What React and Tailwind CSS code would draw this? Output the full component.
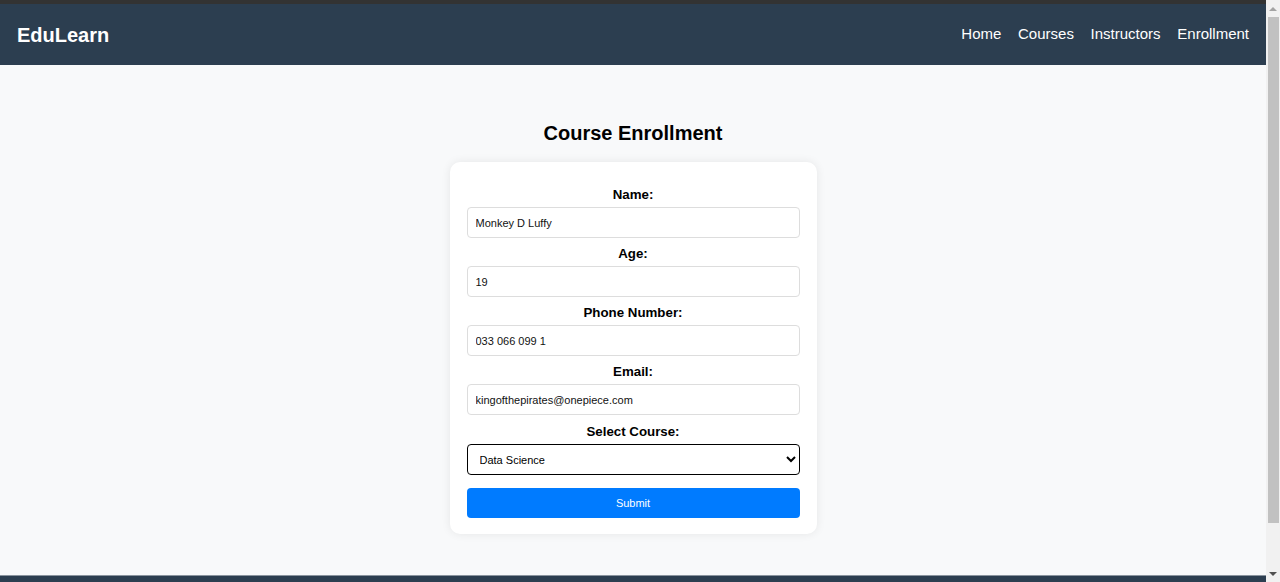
import { useState } from 'react';

const fields = [
    { id: 'name', label: 'Name:', value: 'Monkey D Luffy' },
    { id: 'age', label: 'Age:', value: '19' },
    { id: 'phone', label: 'Phone Number:', value: '033 066 099 1' },
    { id: 'email', label: 'Email:', value: 'kingofthepirates@onepiece.com' },
];

function App() {
    const [values, setValues] = useState(
        Object.fromEntries(fields.map((f) => [f.id, f.value]))
    );
    const [course, setCourse] = useState('Data Science');

    return (
        <div className="flex h-[582px] w-[1280px] overflow-hidden font-['Liberation_Sans',Arial,sans-serif]">
            <div className="flex flex-col w-[1266px] h-full bg-[#f8f9fa]">
                <div className="h-[4px] bg-[#333333]"></div>

                {/* Navbar */}
                <nav className="h-[61px] bg-[#2c3e50] flex items-center justify-between px-[17px] text-white">
                    <span className="text-[20px] font-bold leading-none">EduLearn</span>
                    <div className="flex items-center gap-[16.7px] text-[15px]">
                        <a href="#" className="text-white">Home</a>
                        <a href="#" className="text-white">Courses</a>
                        <a href="#" className="text-white">Instructors</a>
                        <a href="#" className="text-white">Enrollment</a>
                    </div>
                </nav>

                <main className="flex-1 flex flex-col items-center pt-[56px]">
                    <h2 className="text-[20px] leading-[24px] font-bold text-black mb-[17px]">
                        Course Enrollment
                    </h2>

                    <form
                        onSubmit={(e) => e.preventDefault()}
                        className="w-[367px] bg-white rounded-[10px] shadow-[0_0_10px_rgba(0,0,0,0.08)] pt-[25px] px-[17px] pb-[16px] flex flex-col"
                    >
                        {fields.map((f) => (
                            <div key={f.id} className="flex flex-col">
                                <label
                                    htmlFor={f.id}
                                    className="text-center text-[13.3px] leading-[16px] font-bold text-black mb-[4px]"
                                >
                                    {f.label}
                                </label>
                                <input
                                    id={f.id}
                                    type="text"
                                    value={values[f.id]}
                                    onChange={(e) => setValues({ ...values, [f.id]: e.target.value })}
                                    className="h-[31px] mb-[8px] border border-[#dddddd] rounded-[4px] px-[8px] text-[11px] text-[#111] bg-white outline-none"
                                />
                            </div>
                        ))}

                        <label
                            htmlFor="course"
                            className="text-center text-[13.3px] leading-[16px] font-bold text-black mt-[1px] mb-[4px]"
                        >
                            Select Course:
                        </label>
                        <select
                            id="course"
                            value={course}
                            onChange={(e) => setCourse(e.target.value)}
                            className="h-[31px] border border-black rounded-[4px] px-[8px] text-[11px] text-black bg-white"
                        >
                            <option>Data Science</option>
                            <option>Web Development</option>
                            <option>Machine Learning</option>
                        </select>

                        <button
                            type="submit"
                            className="mt-[13px] h-[30px] bg-[#007bff] text-white text-[11px] rounded-[4px]"
                        >
                            Submit
                        </button>
                    </form>
                </main>

                <footer className="h-[7px] border-t border-[#8a949e] bg-[#2c3e50]"></footer>
            </div>

            {/* Scrollbar */}
            <div className="w-[14px] h-full bg-[#f1f1f1] flex flex-col items-center">
                <div className="h-[17px] flex items-center justify-center">
                    <div className="w-0 h-0 border-l-[4px] border-r-[4px] border-b-[4px] border-l-transparent border-r-transparent border-b-[#a3a3a3]"></div>
                </div>
                <div className="w-[11px] h-[506px] bg-[#c1c1c1]"></div>
                <div className="flex-1 flex items-end justify-center pb-[6px]">
                    <div className="w-0 h-0 border-l-[4px] border-r-[4px] border-t-[4px] border-l-transparent border-r-transparent border-t-[#505050]"></div>
                </div>
            </div>
        </div>
    );
}

export default App;
